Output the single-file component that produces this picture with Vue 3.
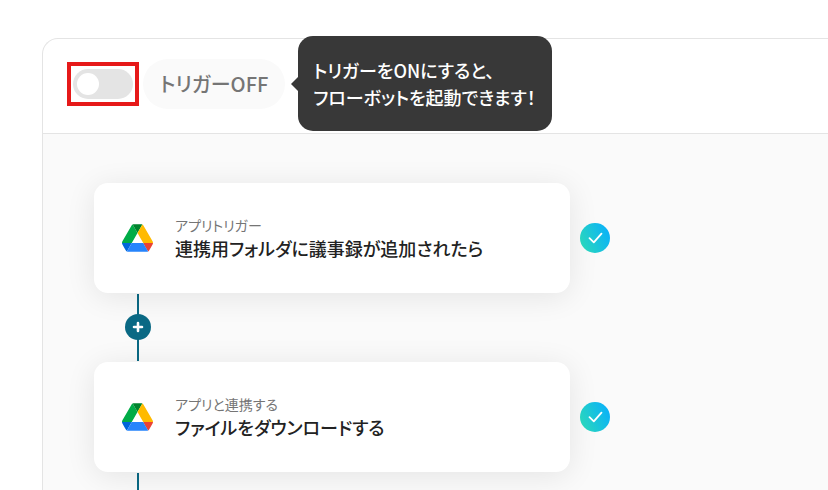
<script setup>
import { ref } from 'vue'

const triggerOn = ref(false)
const steps = [
  { id: 'trigger', label: 'アプリトリガー', title: '連携用フォルダに議事録が追加されたら' },
  { id: 'download', label: 'アプリと連携する', title: 'ファイルをダウンロードする' },
]
</script>

<template>
  <main class="panel">
    <header class="bar">
      <label class="switch-frame">
        <input v-model="triggerOn" class="switch" type="checkbox" role="switch" aria-labelledby="trigger-state" />
      </label>
      <div id="trigger-state" class="state">トリガー{{ triggerOn ? 'ON' : 'OFF' }}</div>
      <div class="tip-anchor">
        <p class="tip" role="tooltip">トリガーをONにすると、<br />フローボットを起動できます！</p>
      </div>
    </header>

    <section class="canvas">
      <template v-for="(step, i) in steps" :key="step.id">
        <div class="step">
          <article class="card">
            <svg class="drive" viewBox="0 0 87.3 78" aria-hidden="true">
              <path fill="#0066da" d="m6.6 66.85 3.85 6.65c.8 1.4 1.95 2.5 3.3 3.3l13.75-23.8h-27.5c0 1.55.4 3.1 1.2 4.5z" />
              <path fill="#00ac47" d="m43.65 25-13.75-23.8c-1.35.8-2.5 1.9-3.3 3.3l-25.4 44a9.06 9.06 0 0 0 -1.2 4.5h27.5z" />
              <path fill="#ea4335" d="m73.55 76.8c1.35-.8 2.5-1.9 3.3-3.3l1.6-2.75 7.65-13.25c.8-1.4 1.2-2.95 1.2-4.5h-27.502l5.852 11.5z" />
              <path fill="#00832d" d="m43.65 25 13.75-23.8c-1.35-.8-2.9-1.2-4.5-1.2h-18.5c-1.6 0-3.15.45-4.5 1.2z" />
              <path fill="#2684fc" d="m59.8 53h-32.3l-13.75 23.8c1.35.8 2.9 1.2 4.5 1.2h50.8c1.6 0 3.15-.45 4.5-1.2z" />
              <path fill="#ffba00" d="m73.4 26.5-12.7-22c-.8-1.4-1.95-2.5-3.3-3.3l-13.75 23.8 16.15 28h27.45c0-1.55-.4-3.1-1.2-4.5z" />
            </svg>
            <div class="texts">
              <p class="label">{{ step.label }}</p>
              <h2 class="title">{{ step.title }}</h2>
            </div>
          </article>
          <span class="done" role="img" aria-label="完了">
            <svg viewBox="0 0 30 30">
              <path d="M9.5 15.2l4.3 4.1 7.7-8.6" fill="none" stroke="#fff" stroke-width="1.8" stroke-linecap="round" stroke-linejoin="round" />
            </svg>
          </span>
        </div>
        <div class="link">
          <button v-if="i < steps.length - 1" class="add" type="button" aria-label="追加">
            <svg viewBox="0 0 26 26">
              <path d="M13 9v8M9 13h8" stroke="#fff" stroke-width="2.6" stroke-linecap="round" />
            </svg>
          </button>
        </div>
      </template>
    </section>
  </main>
</template>

<style>
body {
  background: #fff;
}
</style>

<style scoped>
* {
  box-sizing: border-box;
}
.panel {
  display: flex;
  flex-direction: column;
  height: calc(100vh - 38px);
  margin: 38px 0 0 42px;
  border: 1px solid #e4e4e4;
  border-width: 1px 0 0 1px;
  border-radius: 16px 0 0 0;
  font-family: "Noto Sans CJK JP", sans-serif;
  font-feature-settings: "palt";
}
.bar {
  display: flex;
  align-items: center;
  flex: none;
  height: 95px;
  padding: 0 24px 4px;
  border-bottom: 1px solid #e4e4e4;
}
.switch-frame {
  display: flex;
  padding: 3px 2px;
  border: 4px solid #e61919;
}
.switch {
  appearance: none;
  display: flex;
  align-items: center;
  width: 60px;
  height: 30px;
  margin: 0;
  padding: 4px;
  border-radius: 15px;
  background: #e4e4e4;
  cursor: pointer;
}
.switch::before {
  content: "";
  width: 22px;
  height: 22px;
  border-radius: 50%;
  background: #fff;
}
.switch:checked {
  justify-content: flex-end;
  background: #1fc3d6;
}
.state {
  height: 50px;
  margin-left: 4px;
  padding: 0 17px;
  border-radius: 25px;
  background: #fafafa;
  color: #757575;
  font-size: 20px;
  font-weight: 500;
  line-height: 50px;
  white-space: nowrap;
}
.tip-anchor {
  position: relative;
  align-self: center;
  width: 0;
}
.tip {
  position: absolute;
  top: -48px;
  left: 13px;
  width: 254px;
  margin: 0;
  padding: 21px 15px 20px;
  border-radius: 15px;
  background: #383838;
  color: #fff;
  font-size: 18px;
  font-weight: 500;
  line-height: 27px;
  white-space: nowrap;
}
.tip::before {
  content: "";
  position: absolute;
  top: 41px;
  left: -7px;
  border: 7px solid transparent;
  border-left-width: 0;
  border-right-color: #383838;
}
.canvas {
  flex: 1;
  min-height: 0;
  padding: 49px 51px 0;
  overflow: hidden;
  background: #fafafa;
}
.step {
  display: flex;
  align-items: center;
  gap: 10px;
}
.card {
  display: flex;
  align-items: center;
  gap: 22px;
  flex: 0 1 476px;
  height: 110px;
  padding: 0 28px;
  border-radius: 14px;
  background: #fff;
  box-shadow: 0 4px 30px rgba(0, 0, 0, 0.09);
}
.drive {
  flex: none;
  width: 31px;
  height: 28px;
}
.label,
.title {
  margin: 0;
  white-space: nowrap;
}
.label {
  color: #757575;
  font-size: 14px;
  font-weight: 400;
  line-height: 20px;
}
.title {
  color: #222;
  font-size: 18px;
  font-weight: 500;
  line-height: 26px;
}
.done {
  flex: none;
  width: 30px;
  height: 30px;
  border-radius: 50%;
  background: linear-gradient(65deg, #2edcb4, #0cb4f5 85%);
}
.done svg,
.add svg {
  display: block;
}
.link {
  display: flex;
  align-items: center;
  justify-content: center;
  width: 88px;
  height: 69px;
  padding-bottom: 2px;
  background: linear-gradient(#0a6984, #0a6984) center / 2px 67px no-repeat;
}
.add {
  width: 26px;
  height: 26px;
  padding: 0;
  border: 0;
  border-radius: 50%;
  background: #0a6984;
  cursor: pointer;
}
</style>
